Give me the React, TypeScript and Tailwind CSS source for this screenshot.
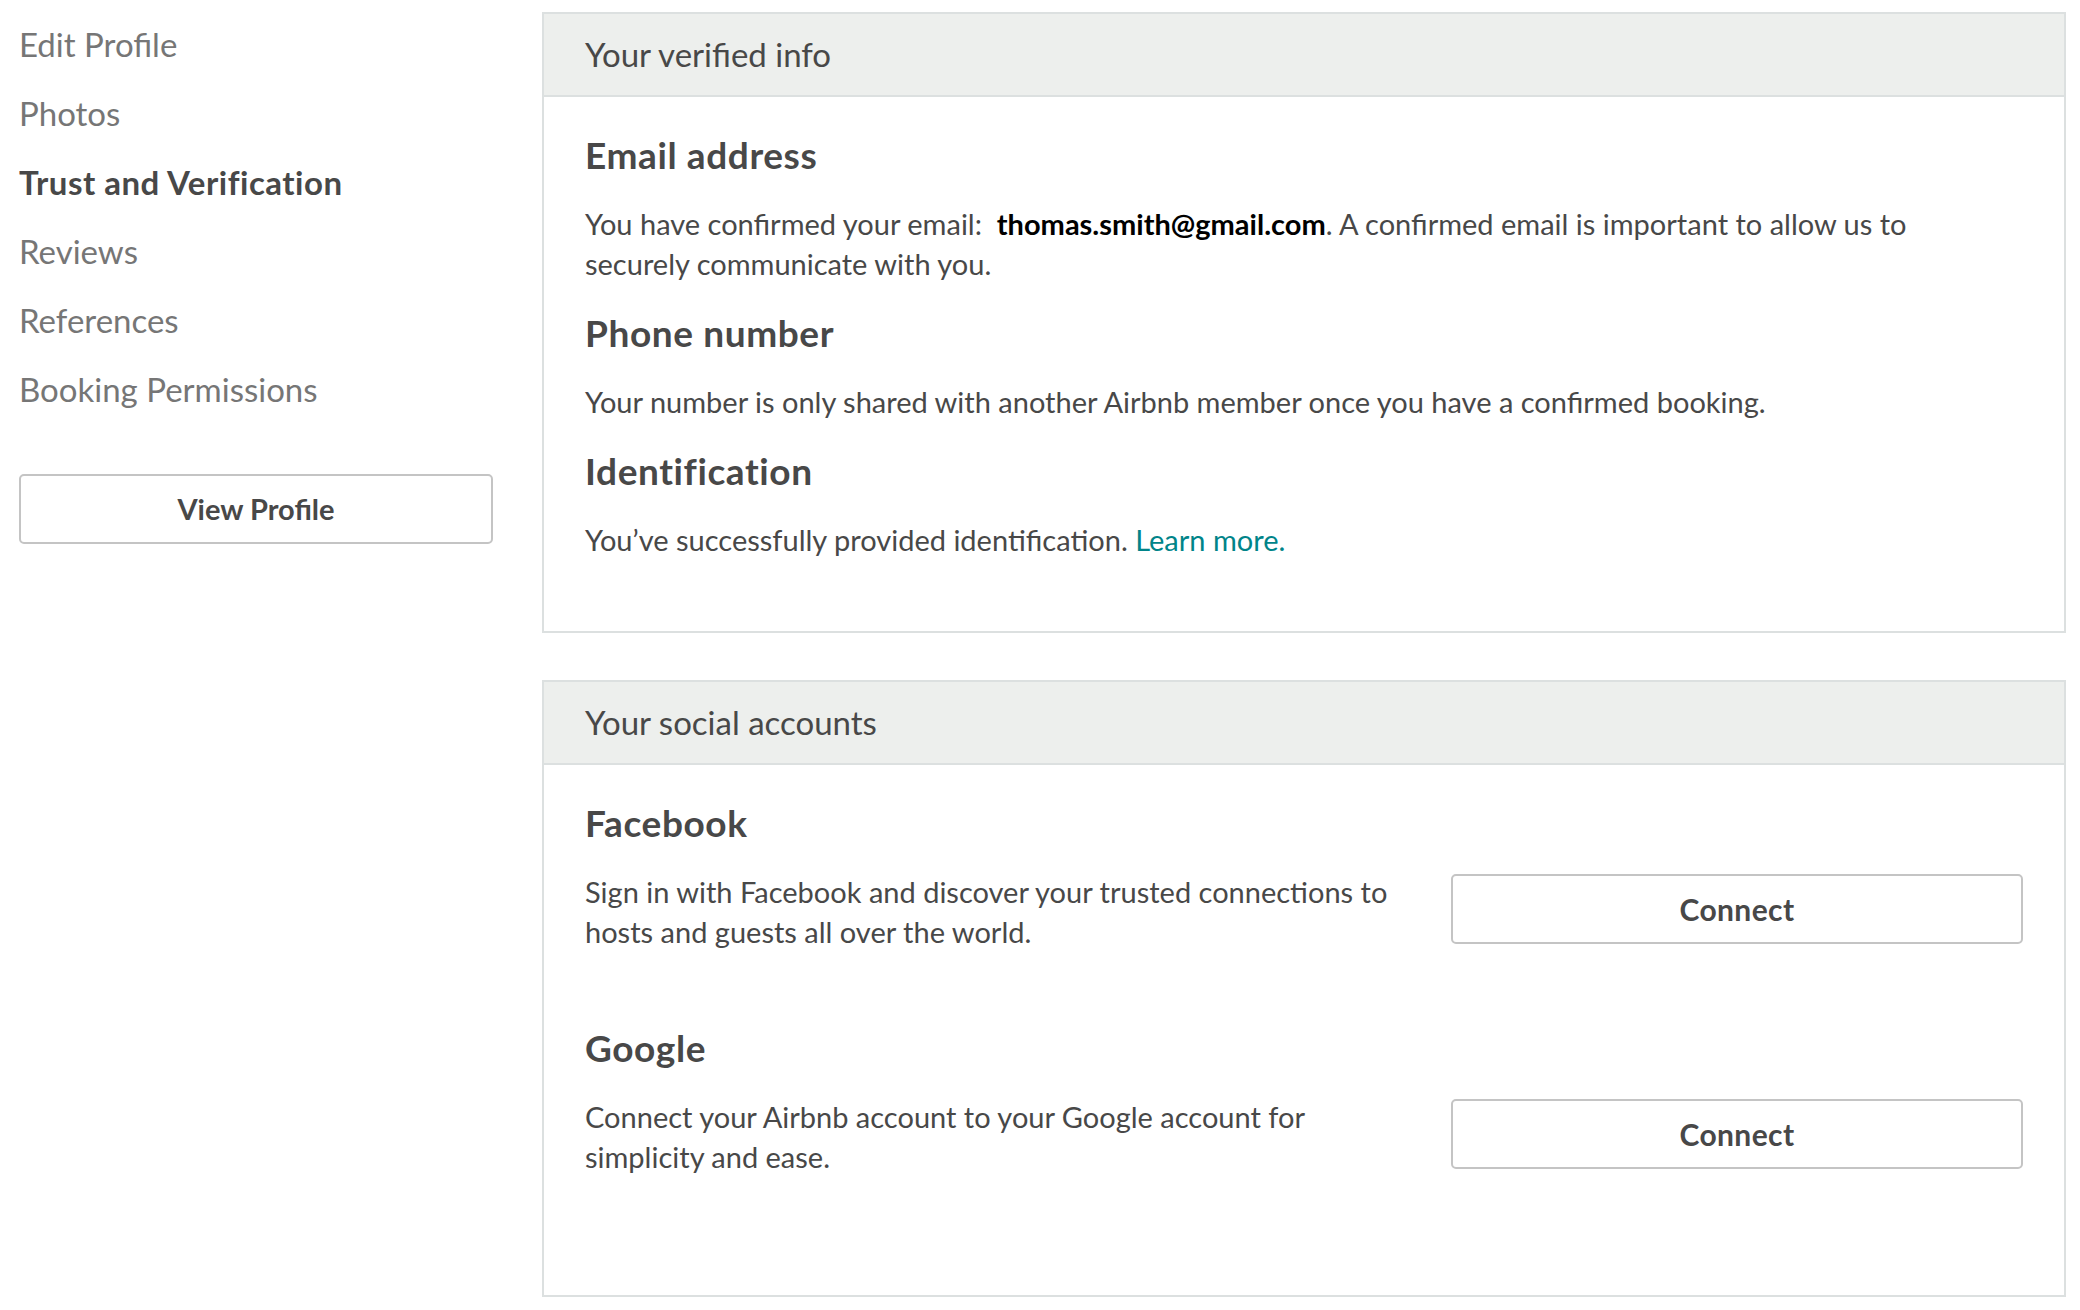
import type { ReactNode } from "react"

const navItems = [
  { label: "Edit Profile" },
  { label: "Photos" },
  { label: "Trust and Verification", active: true },
  { label: "Reviews" },
  { label: "References" },
  { label: "Booking Permissions" },
]

function Card({
  title,
  children,
  bodyClass,
}: {
  title: string
  children: ReactNode
  bodyClass: string
}) {
  return (
    <section className="border-2 border-[#dce0e0] bg-white">
      <div className="border-b-2 border-[#dce0e0] bg-[#edefed] px-[41px] pt-[20px] pb-[21px] text-[33px] leading-[40px] text-[#484848]">
        {title}
      </div>
      <div className={"px-[41px] pt-[36px] " + bodyClass}>{children}</div>
    </section>
  )
}

function Heading({ children }: { children: ReactNode }) {
  return (
    <h3 className="mb-[27px] text-[37px] font-bold leading-[44px] tracking-[0.6px] text-[#484848]">
      {children}
    </h3>
  )
}

function OutlineButton({ label, className = "" }: { label: string; className?: string }) {
  return (
    <button
      className={
        "h-[70px] rounded-[5px] border-2 border-[#c4c4c4] bg-white font-bold text-[#484848] " +
        className
      }
    >
      {label}
    </button>
  )
}

function SocialRow({ name, text }: { name: string; text: string }) {
  return (
    <div>
      <Heading>{name}</Heading>
      <div className="flex items-start justify-between">
        <p className="w-[820px] text-[29px] leading-[40px] text-[#484848]">{text}</p>
        <OutlineButton label="Connect" className="mt-[2px] w-[572px] text-[30px] tracking-[0.4px]" />
      </div>
    </div>
  )
}

export default function App() {
  return (
    <div className="flex min-h-screen items-start gap-[49px] bg-white pl-[19px] pr-[14px] font-[family-name:Lato,'Liberation_Sans',sans-serif]">
      {/* left nav */}
      <aside className="w-[474px] shrink-0 pt-[10px]">
        <ul>
          {navItems.map((item) => (
            <li
              key={item.label}
              className={
                "text-[33px] leading-[69px] " +
                (item.active ? "font-bold tracking-[0.5px] text-[#484848]" : "text-[#767676]")
              }
            >
              {item.label}
            </li>
          ))}
        </ul>
        <OutlineButton label="View Profile" className="mt-[50px] w-full text-[29px]" />
      </aside>

      {/* main column */}
      <main className="flex-1 pt-[12px]">
        <Card title="Your verified info" bodyClass="pb-[71px]">
          <Heading>Email address</Heading>
          <p className="max-w-[1380px] text-[29px] leading-[40px] text-[#484848]">
            You have confirmed your email:{"\u00a0 "}
            <span className="font-bold text-black">thomas.smith@gmail.com</span>. A confirmed
            email is important to allow us to securely communicate with you.
          </p>

          <div className="mt-[27px]">
            <Heading>Phone number</Heading>
            <p className="text-[29px] leading-[40px] text-[#484848]">
              Your number is only shared with another Airbnb member once you have a confirmed
              booking.
            </p>
          </div>

          <div className="mt-[27px]">
            <Heading>Identification</Heading>
            <p className="text-[29px] leading-[40px] text-[#484848]">
              You’ve successfully provided identification.{" "}
              <a className="text-[#008489]">Learn more.</a>
            </p>
          </div>
        </Card>

        <div className="mt-[47px]">
          <Card title="Your social accounts" bodyClass="pb-[118px]">
            <SocialRow
              name="Facebook"
              text="Sign in with Facebook and discover your trusted connections to hosts and guests all over the world."
            />
            <div className="mt-[74px]">
              <SocialRow
                name="Google"
                text="Connect your Airbnb account to your Google account for simplicity and ease."
              />
            </div>
          </Card>
        </div>
      </main>
    </div>
  )
}
